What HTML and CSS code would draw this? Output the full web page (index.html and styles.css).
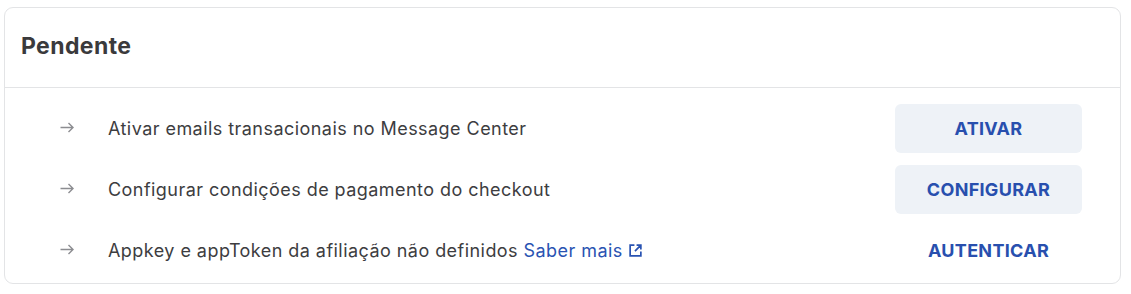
FILE: index.html
```html
<!DOCTYPE html>
<html lang="pt">
<head>
  <meta charset="UTF-8">
  <title>Pendente</title>
  <link rel="stylesheet" href="styles.css">
</head>
<body>
  <div class="card">
    <div class="card-header">
      <h2>Pendente</h2>
    </div>
    <ul class="task-list">
      <li class="task">
        <span class="arrow">
          <svg width="14" height="11" viewBox="0 0 14 11"><path d="M0.5 5.5h12.5M8.5 1 13 5.5 8.5 10" fill="none" stroke="currentColor" stroke-width="1.4"/></svg>
        </span>
        <span class="task-text">Ativar emails transacionais no Message Center</span>
        <button class="btn btn-filled">ATIVAR</button>
      </li>
      <li class="task">
        <span class="arrow">
          <svg width="14" height="11" viewBox="0 0 14 11"><path d="M0.5 5.5h12.5M8.5 1 13 5.5 8.5 10" fill="none" stroke="currentColor" stroke-width="1.4"/></svg>
        </span>
        <span class="task-text">Configurar condições de pagamento do checkout</span>
        <button class="btn btn-filled">CONFIGURAR</button>
      </li>
      <li class="task">
        <span class="arrow">
          <svg width="14" height="11" viewBox="0 0 14 11"><path d="M0.5 5.5h12.5M8.5 1 13 5.5 8.5 10" fill="none" stroke="currentColor" stroke-width="1.4"/></svg>
        </span>
        <span class="task-text">Appkey e appToken da afiliação não definidos
          <a class="link" href="#">Saber mais<svg width="15" height="15" viewBox="0 0 14 14"><path d="M6 2H2v10h10V8M8 2h4v4M12 2 6.5 7.5" fill="none" stroke="currentColor" stroke-width="1.6"/></svg></a>
        </span>
        <button class="btn">AUTENTICAR</button>
      </li>
    </ul>
  </div>
</body>
</html>
```

FILE: styles.css
```css
body {
  margin: 0;
  padding: 7px 10px 0 4px;
  background: #fff;
  font-family: Inter, 'Noto Sans', sans-serif;
  color: #3d3d3f;
}

.card {
  border: 1px solid #e3e4e6;
  border-radius: 9px;
  background: #fff;
}

.card-header {
  height: 79px;
  display: flex;
  align-items: center;
  padding: 0 16px;
  border-bottom: 1px solid #e3e4e6;
}

.card-header h2 {
  margin: 0;
  font-size: 23px;
  font-weight: 700;
  letter-spacing: 0.4px;
  color: #3a3a3c;
  padding-bottom: 3px;
}

.task-list {
  list-style: none;
  margin: 0;
  padding: 16px 38px 8px 55px;
  display: flex;
  flex-direction: column;
  gap: 12px;
}

.task {
  display: flex;
  align-items: center;
  height: 49px;
}

.arrow {
  width: 48px;
  display: flex;
  color: #8c8d91;
  padding-bottom: 3px;
}

.task-text {
  flex: 1;
  font-size: 18px;
  letter-spacing: 0.45px;
  color: #3d3d3f;
}

.link {
  color: #2953b2;
  text-decoration: none;
}

.link svg {
  margin-left: 5px;
  vertical-align: -1px;
}

.btn {
  width: 187px;
  height: 49px;
  border: none;
  border-radius: 6px;
  background: transparent;
  color: #284fae;
  font-family: Inter, 'Noto Sans', sans-serif;
  font-size: 18px;
  font-weight: 700;
  letter-spacing: 0.3px;
  cursor: pointer;
}

.btn-filled {
  background: #eef2f7;
}
```
